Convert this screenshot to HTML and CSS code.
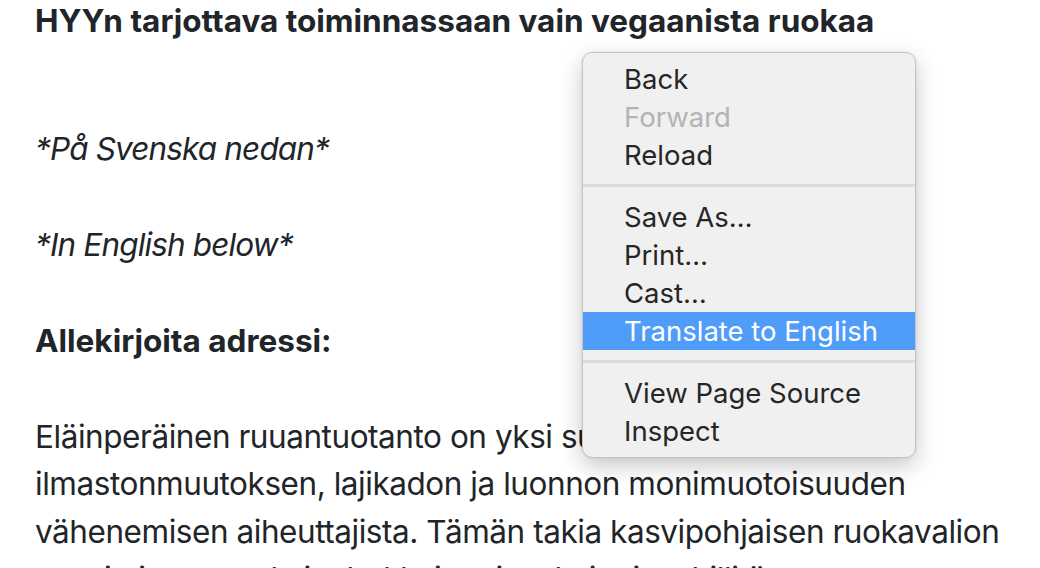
FILE: index.html
```html
<!DOCTYPE html>
<html lang="fi">
<head>
<meta charset="utf-8">
<title>HYYn tarjottava toiminnassaan vain vegaanista ruokaa</title>
<link rel="stylesheet" href="styles.css">
</head>
<body>
<main class="content">
  <p class="title"><strong>HYYn tarjottava toiminnassaan vain vegaanista ruokaa</strong></p>
  <p class="note"><em>*På Svenska nedan*</em></p>
  <p class="note"><em>*In English below*</em></p>
  <p class="note"><strong>Allekirjoita adressi:</strong></p>
  <p class="body-text">Eläinperäinen ruuantuotanto on yksi suurimmista ilmastonmuutoksen, lajikadon ja luonnon monimuotoisuuden vähenemisen aiheuttajista. Tämän takia kasvipohjaisen ruokavalion suosiminen on yksi tehokkaimmista keinoista hillitä ilmastonmuutosta ja sen vaikutuksia.</p>
</main>

<div class="context-menu" role="menu">
  <div class="item">Back</div>
  <div class="item disabled">Forward</div>
  <div class="item">Reload</div>
  <div class="separator"></div>
  <div class="item">Save As…</div>
  <div class="item">Print…</div>
  <div class="item">Cast…</div>
  <div class="item active">Translate to English</div>
  <div class="separator"></div>
  <div class="item">View Page Source</div>
  <div class="item">Inspect</div>
</div>
</body>
</html>
```
FILE: styles.css
```css
html, body {
  margin: 0;
  padding: 0;
  background: #ffffff;
  overflow: hidden;
}

body {
  width: 1040px;
  height: 568px;
  position: relative;
  font-family: Inter, "Noto Sans", sans-serif;
  color: #212529;
}

.content {
  width: 970px;
  padding: 0 0 0 35px;
  font-size: 31.5px;
  line-height: 47.25px;
  letter-spacing: -0.45px;
}

.content p {
  margin: 0;
}

.title {
  margin-top: -2.6px !important;
  margin-bottom: 80.5px !important;
}

.content strong {
  font-weight: 700;
  letter-spacing: 0;
}

.note {
  margin-bottom: 48.75px !important;
}

.content em {
  letter-spacing: -0.85px;
}

.context-menu {
  position: absolute;
  left: 582px;
  top: 52px;
  width: 332px;
  padding: 7px 0;
  background: #f0f0f0;
  border: 1px solid #c4c4c4;
  border-radius: 10px;
  box-shadow: 0 8px 22px rgba(0, 0, 0, 0.22), 0 0 3px rgba(0, 0, 0, 0.08);
  font-family: Inter, "Noto Sans", sans-serif;
  font-size: 27.5px;
  color: #262626;
}

.item {
  height: 38px;
  line-height: 38px;
  padding-left: 41px;
  white-space: nowrap;
}

.item.disabled {
  color: #b3b3b3;
}

.item.active {
  background: #4f9cf9;
  color: #ffffff;
}

.separator {
  height: 3px;
  margin: 10px 0 11px;
  background: #dcdcdc;
}
```
